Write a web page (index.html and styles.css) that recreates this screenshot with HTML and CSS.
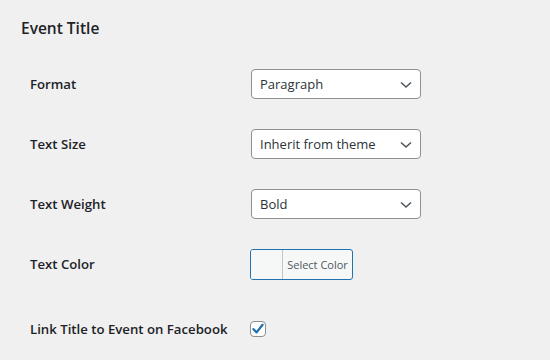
FILE: index.html
```html
<!DOCTYPE html>
<html>
<head>
<meta charset="utf-8">
<link rel="stylesheet" href="styles.css">
</head>
<body>
<div class="panel">
  <h2 class="title">Event Title</h2>
  <div class="rows">
    <div class="row">
      <div class="label">Format</div>
      <div class="field">
        <div class="select"><span>Paragraph</span>
          <svg class="chev" width="12" height="8" viewBox="0 0 12 8"><path d="M1 1.5 L6 6 L11 1.5" fill="none" stroke="#50575e" stroke-width="1.6"/></svg>
        </div>
      </div>
    </div>
    <div class="row">
      <div class="label">Text Size</div>
      <div class="field">
        <div class="select"><span>Inherit from theme</span>
          <svg class="chev" width="12" height="8" viewBox="0 0 12 8"><path d="M1 1.5 L6 6 L11 1.5" fill="none" stroke="#50575e" stroke-width="1.6"/></svg>
        </div>
      </div>
    </div>
    <div class="row">
      <div class="label">Text Weight</div>
      <div class="field">
        <div class="select"><span>Bold</span>
          <svg class="chev" width="12" height="8" viewBox="0 0 12 8"><path d="M1 1.5 L6 6 L11 1.5" fill="none" stroke="#50575e" stroke-width="1.6"/></svg>
        </div>
      </div>
    </div>
    <div class="row">
      <div class="label">Text Color</div>
      <div class="field">
        <div class="colorbtn"><span class="swatch"></span><span class="ctext">Select Color</span></div>
      </div>
    </div>
    <div class="row last">
      <div class="label">Link Title to Event on Facebook</div>
      <div class="field">
        <span class="check"><svg width="14" height="14" viewBox="0 0 14 14"><path d="M2.5 7.2 L5.6 10.4 L11.6 2.8" fill="none" stroke="#2271b1" stroke-width="2.3" stroke-linecap="round" stroke-linejoin="round"/></svg></span>
      </div>
    </div>
  </div>
</div>
</body>
</html>
```
FILE: styles.css
```css
html, body {
  margin: 0;
  padding: 0;
  background: #f0f0f1;
}
body {
  font-family: "Open Sans", "Noto Sans", sans-serif;
  color: #1d2327;
}
.panel {
  padding: 14px 0 0 21px;
}
.title {
  margin: 0;
  font-size: 15.5px;
  font-weight: 600;
  line-height: 28px;
  height: 40px;
}
.rows {
  padding-left: 9px;
}
.row {
  display: flex;
  align-items: center;
  height: 60px;
}
.row.last {
  height: 70px;
}
.label {
  width: 221px;
  font-size: 13.2px;
  font-weight: 600;
}
.field {
  display: flex;
  align-items: center;
}
.select {
  box-sizing: border-box;
  width: 170px;
  height: 30px;
  background: #fff;
  border: 1px solid #8c8f94;
  border-radius: 4px;
  display: flex;
  align-items: center;
  justify-content: space-between;
  padding: 0 8px 0 8px;
  font-size: 13px;
  color: #2c3338;
}
.chev {
  display: block;
  margin-top: 1px;
}
.colorbtn {
  box-sizing: border-box;
  margin-left: -1px;
  width: 103px;
  height: 31px;
  border: 1px solid #2271b1;
  border-radius: 3px;
  display: flex;
  overflow: hidden;
  background: #f6f7f7;
}
.swatch {
  width: 31px;
  border-right: 1px solid #c3c4c7;
  background: #f6f7f7;
}
.ctext {
  flex: 1;
  display: flex;
  align-items: center;
  justify-content: center;
  font-size: 11px;
  color: #50575e;
}
.check {
  box-sizing: border-box;
  margin-left: -1px;
  width: 16px;
  height: 16px;
  border: 1px solid #8c8f94;
  border-radius: 4px;
  background: #fff;
  display: flex;
  align-items: center;
  justify-content: center;
}
.check svg {
  display: block;
}
```
